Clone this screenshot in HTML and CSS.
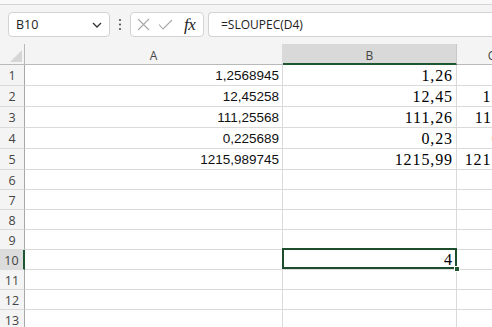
FILE: index.html
```html
<!DOCTYPE html>
<html lang="cs">
<head>
<meta charset="utf-8">
<title>Excel</title>
<link rel="stylesheet" href="styles.css">
</head>
<body>
<div class="app">
  <div class="ribbon-edge"></div>
  <div class="fbar">
    <div class="namebox">
      <span class="nb-text">B10</span>
      <svg class="chev" width="10" height="6" viewBox="0 0 10 6"><path d="M1 1 L5 5 L9 1" fill="none" stroke="#333" stroke-width="1.3"/></svg>
    </div>
    <div class="dots">
      <svg width="4" height="13" viewBox="0 0 4 13"><circle cx="2" cy="2" r="1.1" fill="#555"/><circle cx="2" cy="6.5" r="1.1" fill="#555"/><circle cx="2" cy="11" r="1.1" fill="#555"/></svg>
    </div>
    <div class="fxbox">
      <svg class="ic-x" width="13" height="13" viewBox="0 0 13 13"><path d="M1 1 L12 12 M12 1 L1 12" stroke="#a8a8a8" stroke-width="1.1" fill="none"/></svg>
      <svg class="ic-ok" width="15" height="11" viewBox="0 0 15 11"><path d="M1 5.5 L5 10 L14 1" stroke="#a8a8a8" stroke-width="1.1" fill="none"/></svg>
      <span class="fx">fx</span>
    </div>
    <div class="formula">=SLOUPEC(D4)</div>
  </div>
  <div class="sheet">
    <div class="corner"><svg width="14" height="14" viewBox="0 0 14 14"><polygon points="13,1 13,13 1,13" fill="#d6d6d6"/></svg></div>
    <div class="ch">A</div>
    <div class="ch ch-sel">B</div>
    <div class="ch">C</div>

    <div class="rh">1</div><div class="c ca">1,2568945</div><div class="c cb">1,26</div><div class="c cb">1,26</div>
    <div class="rh">2</div><div class="c ca">12,45258</div><div class="c cb">12,45</div><div class="c cb">12,45</div>
    <div class="rh">3</div><div class="c ca">111,25568</div><div class="c cb">111,26</div><div class="c cb">111,26</div>
    <div class="rh">4</div><div class="c ca">0,225689</div><div class="c cb">0,23</div><div class="c cb">0,23</div>
    <div class="rh">5</div><div class="c ca">1215,989745</div><div class="c cb">1215,99</div><div class="c cb">1215,99</div>
    <div class="rh">6</div><div class="c"></div><div class="c"></div><div class="c"></div>
    <div class="rh">7</div><div class="c"></div><div class="c"></div><div class="c"></div>
    <div class="rh">8</div><div class="c"></div><div class="c"></div><div class="c"></div>
    <div class="rh">9</div><div class="c"></div><div class="c"></div><div class="c"></div>
    <div class="rh rh-sel">10</div><div class="c"></div><div class="c cb active">4<span class="sel"><span class="handle"></span></span></div><div class="c"></div>
    <div class="rh">11</div><div class="c"></div><div class="c"></div><div class="c"></div>
    <div class="rh">12</div><div class="c"></div><div class="c"></div><div class="c"></div>
    <div class="rh">13</div><div class="c"></div><div class="c"></div><div class="c"></div>
  </div>
</div>
</body>
</html>
```

FILE: styles.css
```css
* { box-sizing: border-box; }
html, body { margin: 0; padding: 0; }
body {
  width: 492px;
  height: 327px;
  overflow: hidden;
  background: #f4f4f4;
  font-family: "Liberation Sans", Arial, sans-serif;
}
.app { width: 492px; height: 327px; overflow: hidden; }
.ribbon-edge {
  height: 5px;
  background: #f9f9f9;
  border-bottom: 1px solid #d4d4d4;
}
.fbar {
  display: flex;
  align-items: center;
  height: 39px;
  padding: 7px 0 7px 8px;
}
.namebox {
  width: 102px;
  height: 25px;
  background: #fff;
  border: 1px solid #d3d3d3;
  border-radius: 4px;
  display: flex;
  align-items: center;
  justify-content: space-between;
  padding: 0 7px 0 7px;
}
.nb-text { font-family: "Open Sans", sans-serif; font-size: 12.5px; color: #222; }
.chev { margin-top: 1px; }
.dots {
  width: 20px;
  display: flex;
  justify-content: center;
  align-items: center;
}
.fxbox {
  width: 74px;
  height: 25px;
  background: #fff;
  border: 1px solid #d3d3d3;
  border-radius: 4px;
  display: flex;
  align-items: center;
  padding: 0 0 0 6px;
}
.ic-x { margin-right: 8px; }
.ic-ok { margin-right: 11px; }
.fx {
  font-family: "Liberation Serif", serif;
  font-style: italic;
  font-size: 17px;
  color: #222;
  letter-spacing: -0.5px;
}
.formula {
  margin-left: 4px;
  flex: 1;
  height: 25px;
  background: #fff;
  border: 1px solid #d3d3d3;
  border-right: none;
  border-radius: 4px 0 0 4px;
  display: flex;
  align-items: center;
  padding-left: 12px;
  font-family: "Open Sans", sans-serif;
  font-size: 12px;
  color: #222;
}
.sheet {
  display: grid;
  grid-template-columns: 25px 258px 174px 70px;
  grid-template-rows: 21px 21px 21px 21px 21px 21px;
  grid-auto-rows: 20px;
  width: 527px;
}
.corner {
  border-bottom: 1px solid #b9b9b9;
  border-right: 1px solid #b9b9b9;
  display: flex;
  align-items: flex-end;
  justify-content: flex-end;
  padding: 0 1px 1px 0;
}
.ch {
  border-bottom: 1px solid #b9b9b9;
  border-right: 1px solid #dadada;
  font-family: "Open Sans", sans-serif;
  font-size: 12px;
  color: #444;
  display: flex;
  align-items: center;
  justify-content: center;
  padding-top: 3px;
}
.ch-sel {
  background: #d9d9d9;
  border-bottom: 2px solid #1e5631;
  border-right-color: #c8c8c8;
}
.rh {
  border-right: 1px solid #a8a8a8;
  border-bottom: 1px solid #dadada;
  font-family: "Open Sans", sans-serif;
  font-size: 12.5px;
  color: #444;
  display: flex;
  align-items: center;
  justify-content: center;
  padding-top: 1px;
}
.rh-sel {
  background: #dcdcdc;
  border-right: 2px solid #1e5631;
}
.c {
  background: #fff;
  border-right: 1px solid #dadada;
  border-bottom: 1px solid #dadada;
  display: flex;
  align-items: flex-end;
  justify-content: flex-end;
  white-space: nowrap;
  overflow: visible;
  color: #000;
}
.ca {
  font-family: "Liberation Sans", Arial, sans-serif;
  font-size: 13.5px;
  padding: 0 3px 2px 0;
  color: #111;
}
.cb {
  font-family: "Liberation Serif", "Times New Roman", serif;
  font-size: 16px;
  letter-spacing: 0.9px;
  padding: 0 3px 0 0;
}
.active { position: relative; }
.sel {
  position: absolute;
  top: -2px;
  left: -1px;
  right: -1px;
  bottom: 0;
  border: 2px solid #1e4d2e;
}
.handle {
  position: absolute;
  right: -5px;
  bottom: -5px;
  width: 6px;
  height: 6px;
  background: #1e5631;
  border: 1px solid #fff;
}
```
